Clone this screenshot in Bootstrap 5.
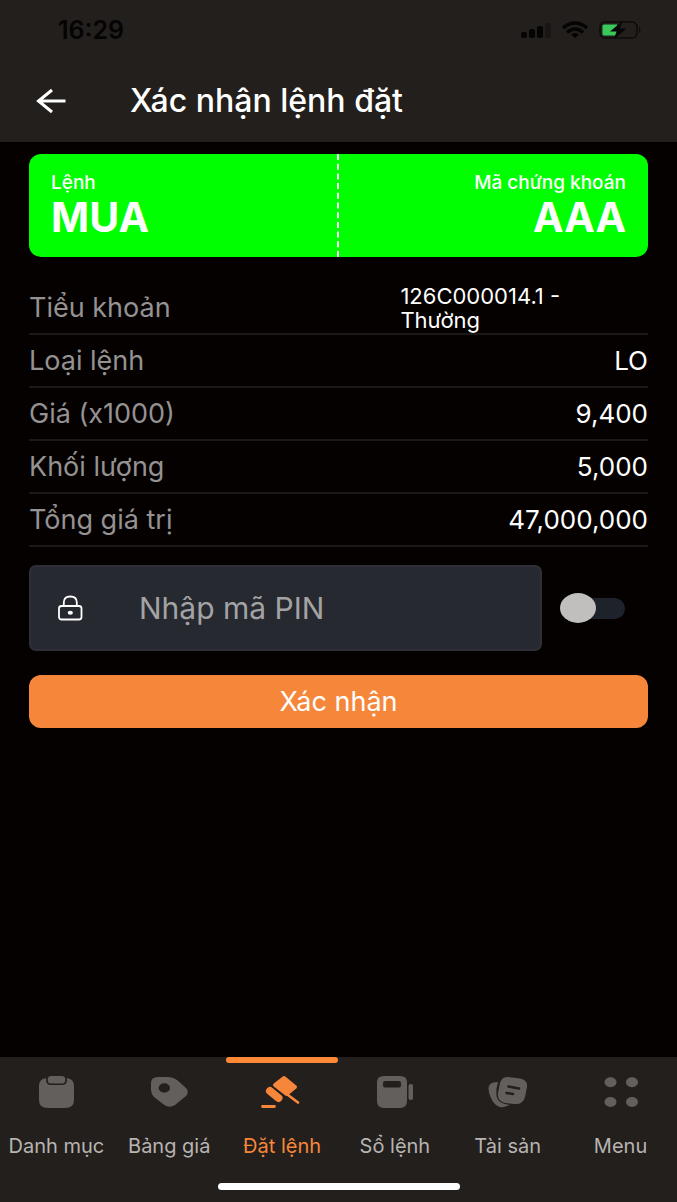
<!DOCTYPE html>
<html lang="vi">
<head>
<meta charset="utf-8">
<meta name="viewport" content="width=device-width, initial-scale=1">
<title>Xác nhận lệnh đặt</title>
<link href="https://cdn.jsdelivr.net/npm/bootstrap@5.3.0/dist/css/bootstrap.min.css" rel="stylesheet">
<style>
  :root { --panel: #231f1d; --accent: #f6873a; --line: #1b1918; }
  body { background: #050100; color: #fff; font-family: Inter, Roboto, sans-serif; }
  .top-area { background: var(--panel); color: #fff; }
  .status-bar { height: 60px; padding: 0 35px 0 58px; color: #050303; }
  .clock { font-size: 25px; font-weight: 600; line-height: 24px; }
  .title-bar { height: 82px; padding: 0 36px; gap: 64px; }
  .title-bar h1 { font-size: 32px; line-height: 36px; font-weight: 500; }
  .page-main { padding: 12px 29px 0; }
  .ticket { background: #00ff00; border-radius: 12px; overflow: hidden; }
  .ticket-half { height: 103px; padding: 17px 22px 0; }
  .ticket-half:first-child { border-right: 2px dashed #fff; }
  .ticket-label { font-size: 19px; line-height: 24px; font-weight: 500; }
  .ticket-value { font-size: 41px; line-height: 44px; font-weight: 700; }
  .details { margin: 25px 0 0; }
  .detail-row { height: 53px; border-bottom: 2px solid var(--line); }
  .detail-row dt { font-size: 27px; line-height: 32px; font-weight: 400; color: #949292; }
  .detail-row dd { font-size: 26px; line-height: 32px; }
  .detail-row .account { width: 40%; font-size: 22px; line-height: 24px; }
  .pin-row { margin-top: 18px; gap: 18px; }
  .pin-box { height: 86px; min-width: 0; padding: 0 27px; gap: 56px; background: #262930; border: 2px solid #302e37; border-radius: 7px; }
  .pin-box input { background: none; border: 0; outline: 0; color: #fff; font-size: 30px; line-height: 36px; min-width: 0; }
  .pin-box input::placeholder { color: #a4a3a4; opacity: 1; }
  .pin-toggle { appearance: none; position: relative; width: 65px; height: 21px; margin: 0 23px 0 0; border-radius: 11px; background: #1e232b; }
  .pin-toggle::before { content: ""; position: absolute; left: 0; top: -5px; width: 36px; height: 30px; border-radius: 50%; background: #c1bebe; }
  .pin-toggle:checked::before { left: auto; right: 0; background: var(--accent); }
  .btn-confirm, .btn-confirm:hover { margin-top: 24px; height: 53px; padding: 0; border: 0; border-radius: 12px; background: var(--accent); color: #fff; font-size: 27px; line-height: 32px; }
  .tab-bar { background: var(--panel); }
  .tab-link { padding: 9px 0 0; border-top: 6px solid transparent; color: #b7b4b2; font-size: 20px; line-height: 24px; text-decoration: none; white-space: nowrap; position: relative; }
  .tab-link svg { color: #625f5d; }
  .tab-link.active, .tab-link.active svg { color: var(--accent); }
  .tab-link.active::before { content: ""; position: absolute; left: 0; right: 0; top: -6px; height: 6px; border-radius: 3px; background: #ff8936; }
  .tab-text { margin-top: 22px; }
  .home-pill { width: 242px; height: 7px; margin: 25px auto 12px; border-radius: 4px; background: #fff; }
</style>
</head>
<body class="d-flex flex-column min-vh-100">

<header class="top-area">
  <div class="status-bar d-flex align-items-center justify-content-between">
    <span class="clock">16:29</span>
    <svg width="121" height="20" viewBox="0 0 121 20" fill="currentColor" aria-hidden="true">
      <rect x="0" y="12" width="6" height="6" rx="2"/>
      <rect x="8" y="9" width="6" height="9" rx="2"/>
      <rect x="16" y="6" width="6" height="12" rx="2"/>
      <rect x="24" y="3" width="6" height="15" rx="2" opacity=".3"/>
      <g fill="none" stroke="currentColor" stroke-width="3.400">
        <path d="M42 8Q54-2 66 8M46 12.500Q54 5.500 62 12.500"/>
      </g>
      <path d="M50 14.500Q54 11.500 58 14.500L54 18Z"/>
      <rect x="79" y="2" width="37" height="16" rx="5" fill="none" stroke="currentColor" stroke-width="1.500" opacity=".7"/>
      <path d="M83 4.500H96V15.500H83Q81.500 15.500 81.500 14V6Q81.500 4.500 83 4.500Z" fill="#38c95a"/>
      <path d="M101 1.500L89 11.500H95.500L93 19L105.500 8.500H99Z"/>
      <path d="M118 7Q121 10 118 13Z" opacity=".7"/>
    </svg>
  </div>
  <div class="title-bar d-flex align-items-center">
    <button type="button" class="btn p-0 border-0 text-white d-flex" aria-label="Quay lại">
      <svg width="30" height="26" viewBox="0 0 30 26" fill="none" stroke="currentColor" stroke-width="3"><path d="M16 2L2.500 13L16 24M2 13H29.500"/></svg>
    </button>
    <h1 class="mb-0">Xác nhận lệnh đặt</h1>
  </div>
</header>

<main class="page-main flex-grow-1">
  <section class="ticket d-flex">
    <div class="ticket-half w-50">
      <div class="ticket-label">Lệnh</div>
      <div class="ticket-value">MUA</div>
    </div>
    <div class="ticket-half w-50 text-end">
      <div class="ticket-label">Mã chứng khoán</div>
      <div class="ticket-value">AAA</div>
    </div>
  </section>

  <dl class="details">
    <div class="detail-row d-flex align-items-center justify-content-between"><dt>Tiểu khoản</dt><dd class="account mb-0">126C000014.1 -<br>Thường</dd></div>
    <div class="detail-row d-flex align-items-center justify-content-between"><dt>Loại lệnh</dt><dd class="mb-0">LO</dd></div>
    <div class="detail-row d-flex align-items-center justify-content-between"><dt>Giá (x1000)</dt><dd class="mb-0">9,400</dd></div>
    <div class="detail-row d-flex align-items-center justify-content-between"><dt>Khối lượng</dt><dd class="mb-0">5,000</dd></div>
    <div class="detail-row d-flex align-items-center justify-content-between"><dt>Tổng giá trị</dt><dd class="mb-0">47,000,000</dd></div>
  </dl>

  <form>
    <div class="pin-row d-flex align-items-center">
      <div class="pin-box d-flex align-items-center flex-grow-1">
        <label for="pin" class="d-flex" aria-label="Mã PIN">
          <svg width="25" height="26" viewBox="0 0 25 26" fill="none" stroke="#fff" stroke-width="1.800">
            <rect x="1" y="11" width="22.500" height="13.500" rx="2.500"/>
            <path d="M5.800 11V7.500Q5.800 1.500 12.300 1.500T18.800 7.500V11"/>
            <ellipse cx="12.300" cy="17.700" rx="2.600" ry="2" fill="#fff" stroke="none"/>
          </svg>
        </label>
        <input id="pin" type="password" class="flex-grow-1 p-0" placeholder="Nhập mã PIN">
      </div>
      <input type="checkbox" role="switch" class="pin-toggle flex-shrink-0" aria-label="Lưu mã PIN">
    </div>
    <button type="button" class="btn btn-confirm w-100">Xác nhận</button>
  </form>
</main>

<footer class="tab-bar">
  <nav class="row row-cols-6 g-0 text-center">
    <a href="#" class="col tab-link">
      <svg width="44" height="40" viewBox="0 0 44 40" fill="currentColor" aria-hidden="true">
        <path d="M12 6V8Q12 13 17 13H28Q33 13 33 8V6Q40 7 40 14V28Q40 36 31 36H14Q5 36 5 28V14Q5 7 12 6Z"/>
        <rect x="13.700" y="4" width="17.600" height="7.500" rx="3.500"/>
      </svg>
      <div class="tab-text">Danh mục</div>
    </a>
    <a href="#" class="col tab-link">
      <svg width="44" height="40" viewBox="0 0 44 40" fill="currentColor" aria-hidden="true">
        <path fill-rule="evenodd" d="M11 5H21Q26 5 30 8L38 15Q43 19 39 24L28 33Q22 37 16 32L7 25Q4 22 4 18V11Q4 5 11 5ZM17.300 11.300A5.700 4.700 0 1 0 17.300 20.700A5.700 4.700 0 1 0 17.300 11.300Z"/>
      </svg>
      <div class="tab-text">Bảng giá</div>
    </a>
    <a href="#" class="col tab-link active" aria-current="page">
      <svg width="44" height="40" viewBox="0 0 44 40" fill="currentColor" stroke="currentColor" stroke-linecap="round" aria-hidden="true">
        <path d="M24 6L35 15L26.500 22L15 13Z" stroke-width="4" stroke-linejoin="round"/>
        <path d="M10 19L18.500 26" stroke-width="8"/>
        <path d="M28 23L38 30.500M2.500 34.500H14.500" stroke-width="2.800"/>
      </svg>
      <div class="tab-text">Đặt lệnh</div>
    </a>
    <a href="#" class="col tab-link">
      <svg width="44" height="40" viewBox="0 0 44 40" fill="currentColor" aria-hidden="true">
        <path fill-rule="evenodd" d="M11 4H27Q34 4 34 10V29Q34 36 27 36H11Q4 36 4 29V10Q4 4 11 4ZM12 9Q10 9 10 11V13.500Q10 15.500 12 15.500H26Q28 15.500 28 13.500V11Q28 9 26 9Z"/>
        <rect x="35.500" y="12" width="4.500" height="16" rx="2"/>
      </svg>
      <div class="tab-text">Sổ lệnh</div>
    </a>
    <a href="#" class="col tab-link">
      <svg width="44" height="40" viewBox="0 0 44 40" fill="currentColor" aria-hidden="true">
        <path d="M12 10Q2 10 2.500 17Q3 24 8 31Q12 36 18 35L24 33Q12 32 10.500 24Q9.500 17 12 10Z"/>
        <path d="M22 5L34 6.500Q42 8 41 15L39 25Q37 33 28 32L19 31Q11 29 12 21L14 11Q16 4.500 22 5Z"/>
        <path d="M22.500 14.500L33 16.500M20.500 21L27 22" fill="none" stroke="#231f1d" stroke-width="2.500" stroke-linecap="round"/>
      </svg>
      <div class="tab-text">Tài sản</div>
    </a>
    <a href="#" class="col tab-link">
      <svg width="44" height="40" viewBox="0 0 44 40" fill="currentColor" aria-hidden="true">
        <ellipse cx="11.500" cy="10.300" rx="6" ry="5"/><ellipse cx="33" cy="10.300" rx="6" ry="5"/>
        <ellipse cx="11.500" cy="30" rx="6" ry="5"/><ellipse cx="33" cy="30" rx="6" ry="5"/>
      </svg>
      <div class="tab-text">Menu</div>
    </a>
  </nav>
  <div class="home-pill"></div>
</footer>

<script src="https://cdn.jsdelivr.net/npm/bootstrap@5.3.0/dist/js/bootstrap.bundle.min.js"></script>
</body>
</html>
